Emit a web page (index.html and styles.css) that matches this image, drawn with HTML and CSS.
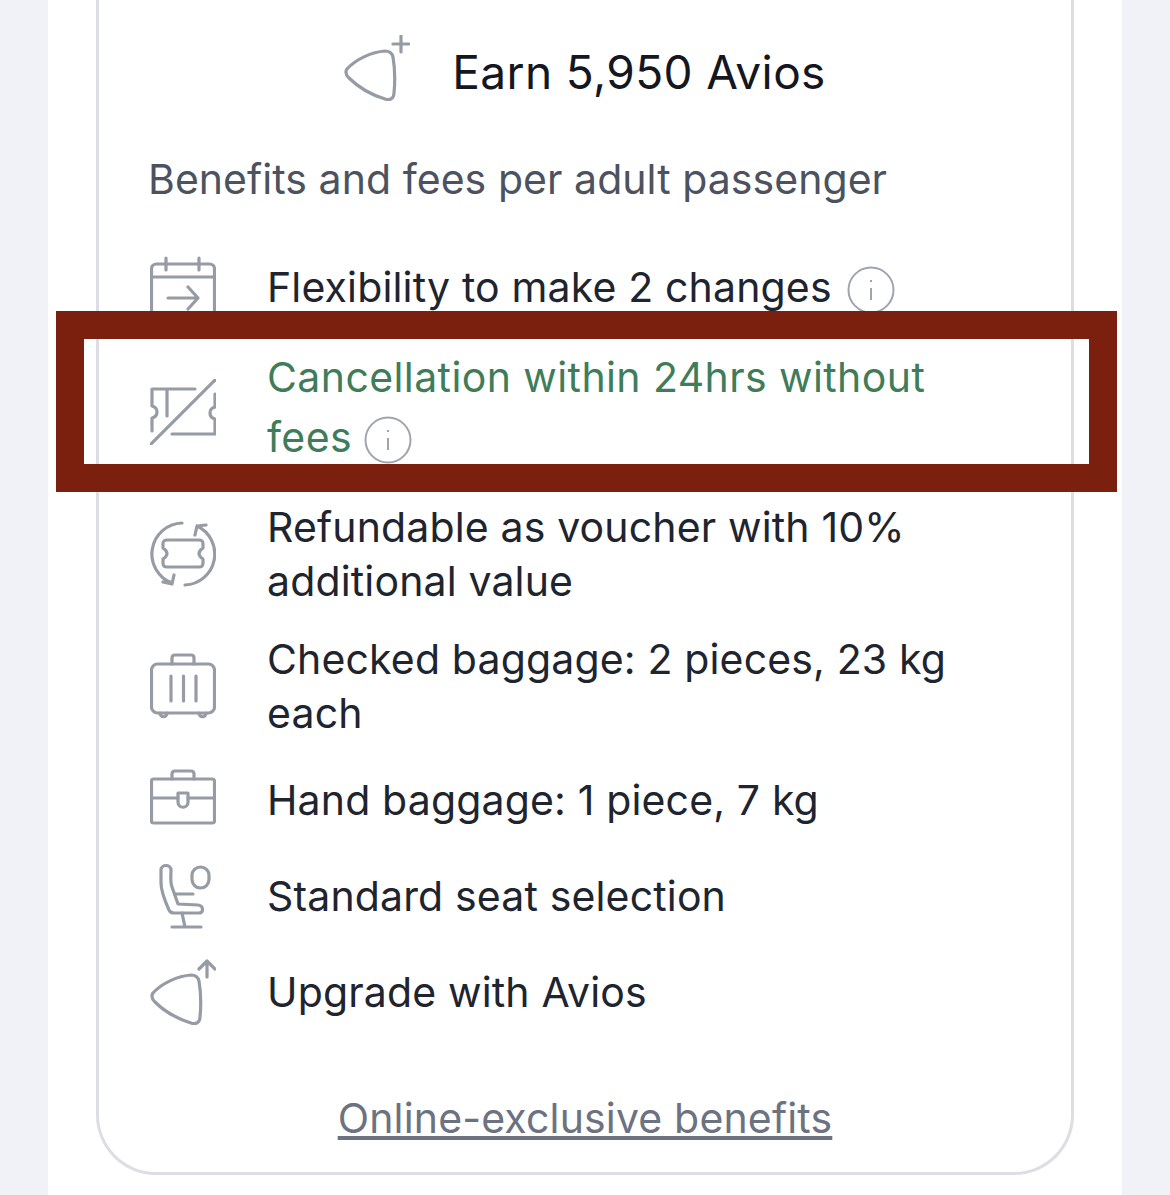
FILE: index.html
```html
<!DOCTYPE html>
<html lang="en">

<head>
    <meta charset="UTF-8">
    <meta name="viewport" content="width=device-width, initial-scale=1.0">
    <title>Fare benefits</title>
    <link rel="stylesheet" href="styles.css">
</head>

<body>
    <div class="sheet">
        <div class="card">
            <div class="earn">
                <svg class="icon" viewBox="0 0 66 66">
                    <path d="M3 34C12 24 28 17 41 16C46 16 48 18 49 22C51 34 51 48 50 58C50 63 46 66 41 64C28 60 15 53 5 43C2 40 1 37 3 34Z" />
                    <path d="M57 1V17M49 9H65" />
                </svg>
                <h2 class="earn_text">Earn 5,950 Avios</h2>
            </div>

            <p class="subtitle">Benefits and fees per adult passenger</p>

            <ul class="benefits">
                <li class="benefit">
                    <svg class="icon" viewBox="0 0 66 66">
                        <rect x="1.500" y="10" width="63" height="52" rx="5" />
                        <path d="M1.500 23H64.500M16 4V16M49 4V16M18 44H48M38 33L48 44L38 55" />
                    </svg>
                    <span class="benefit_text">Flexibility to make 2 changes
                        <svg class="info" viewBox="0 0 48 48">
                            <circle cx="24" cy="24" r="22.500" />
                            <path d="M24 22V34M24 14V16" />
                        </svg>
                    </span>
                </li>
                <li class="benefit benefit_green">
                    <svg class="icon" viewBox="0 0 66 66">
                        <path d="M1 65L65 1" />
                        <path d="M45 10H2V27C6 28 7 31 7 33C7 35 6 38 2 39V52M17 10V37M22 55H65V40C61 39 60 36 60 34C60 32 61 29 65 28V15" />
                    </svg>
                    <span class="benefit_text">Cancellation within 24hrs without fees
                        <svg class="info" viewBox="0 0 48 48">
                            <circle cx="24" cy="24" r="22.500" />
                            <path d="M24 22V34M24 14V16" />
                        </svg>
                    </span>
                </li>
                <li class="benefit">
                    <svg class="icon" viewBox="0 0 66 66">
                        <path d="M32 2A31 31 0 0 0 22 62M13 61L22 63L24 54" />
                        <path d="M35 64A31 31 0 0 0 47 5M56 4L47 5L45 14" />
                        <path d="M17 19H49C52 19 53 20 53 23V27C50 29 49 31 49 32.500C49 34 50 36 53 38V42C53 45 52 46 49 46H17C14 46 13 45 13 42V38C16 36 17 34 17 32.500C17 31 16 29 13 27V23C13 20 14 19 17 19Z" />
                    </svg>
                    <span class="benefit_text">Refundable as voucher with 10% additional value</span>
                </li>
                <li class="benefit">
                    <svg class="icon" viewBox="0 0 66 66">
                        <rect x="1.500" y="11" width="63" height="49" rx="6" />
                        <path d="M22 11V5C22 3 23 2 25 2H41C43 2 44 3 44 5V11M21 23V48M33.500 23V48M46 23V48" />
                        <path d="M10 60C10 65 17 65 17 60M49 60C49 65 56 65 56 60" />
                    </svg>
                    <span class="benefit_text">Checked baggage: 2 pieces, 23 kg each</span>
                </li>
                <li class="benefit">
                    <svg class="icon" viewBox="0 0 66 66">
                        <rect x="1.500" y="12" width="63" height="44" rx="2" />
                        <path d="M22 12V7C22 5 23 4 25 4H41C43 4 44 5 44 7V12M1.500 31H28M38 31H64.500" />
                        <path d="M28 26H38V35C38 42 28 42 28 35Z" />
                    </svg>
                    <span class="benefit_text">Hand baggage: 1 piece, 7 kg</span>
                </li>
                <li class="benefit">
                    <svg class="icon" viewBox="0 0 66 66">
                        <path d="M11 7C11 1 21 1 21 7C21 13 20 19 22 24L28 41L48 42C54 43 54 50 48 50H24C21 50 20 49 19 47C15 38 11 28 11 20Z" />
                        <path d="M25 31H43M32 50L35 64M22 64H51" />
                        <rect x="42" y="4" width="17" height="21" rx="8.500" />
                    </svg>
                    <span class="benefit_text">Standard seat selection</span>
                </li>
                <li class="benefit">
                    <svg class="icon" viewBox="0 0 66 66">
                        <path d="M3 34C12 24 28 17 41 16C46 16 48 18 49 22C51 34 51 48 50 58C50 63 46 66 41 64C28 60 15 53 5 43C2 40 1 37 3 34Z" />
                        <path d="M57 18V2M49 10L57 2L65 10" />
                    </svg>
                    <span class="benefit_text">Upgrade with Avios</span>
                </li>
            </ul>

            <a class="online_link" href="#">Online-exclusive benefits</a>
        </div>
    </div>

    <!-- annotation drawn on top of the screenshot -->
    <div class="highlight"></div>
</body>

</html>
```

FILE: styles.css
```css
body {
    margin: 0;
    padding: 0 48px;
    height: 1195px;
    overflow: hidden;
    background-color: #f0f2f8;
    font-family: "Inter", "Liberation Sans", sans-serif;
    position: relative;
}

.sheet {
    background-color: #fff;
    padding: 0 48px;
    height: 1195px;
}

.card {
    border: 3px solid #dcdde5;
    border-top: none;
    border-radius: 0 0 60px 60px;
    padding: 35px 49px 27px;
}

.icon {
    width: 66px;
    height: 66px;
    flex-shrink: 0;
    fill: none;
    stroke: #969ba5;
    stroke-width: 3.200;
    stroke-linecap: round;
    stroke-linejoin: round;
}

.earn {
    display: flex;
    justify-content: center;
    gap: 42px;
}

.earn_text {
    margin: 4px 0 0;
    font-size: 46px;
    line-height: 66px;
    font-weight: 400;
    letter-spacing: 0.4px;
    color: #14171f;
}

.subtitle {
    margin: 47px 0 0;
    font-size: 41px;
    line-height: 54px;
    letter-spacing: 0.05px;
    color: #4c5260;
}

.benefits {
    list-style: none;
    margin: 45px 0 0;
    padding: 0 0 0 2px;
    display: flex;
    flex-direction: column;
    gap: 24px;
}

.benefit {
    display: flex;
    align-items: center;
    gap: 51px;
    min-height: 72px;
    font-size: 41px;
    line-height: 54px;
    letter-spacing: 0.15px;
    color: #20242e;
}

.benefit_text {
    max-width: 700px;
}

.benefit_green {
    color: #3f7d5a;
    letter-spacing: 0.4px;
}

.benefit_green .benefit_text {
    line-height: 60px;
    padding-bottom: 9px;
}

.benefit_green .info {
    margin-left: 0;
}

.info {
    width: 48px;
    height: 48px;
    margin-left: 4px;
    vertical-align: -12px;
    fill: none;
    stroke: #a0a4ae;
    stroke-width: 2;
}

.online_link {
    display: block;
    margin-top: 63px;
    text-align: center;
    font-size: 41px;
    line-height: 54px;
    letter-spacing: 0.16px;
    color: #6c7280;
}

.highlight {
    position: absolute;
    left: 56px;
    top: 311px;
    width: 1005px;
    height: 125px;
    border: 28px solid #7b1f0f;
}
```
